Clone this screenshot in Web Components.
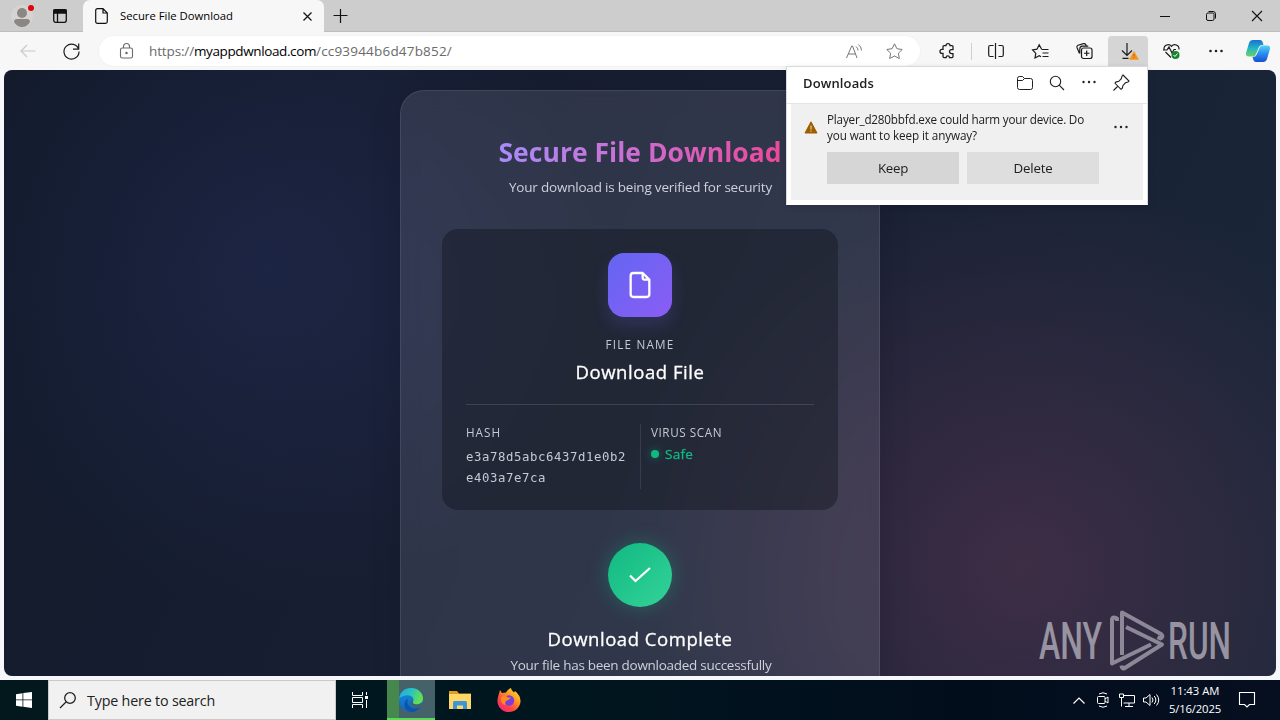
<!DOCTYPE html>
<html lang="en">
<head>
<meta charset="utf-8">
<title>Secure File Download</title>
<style>
html,body{margin:0;height:100%;overflow:hidden;background:#f3f5f9}
body{font-family:"Open Sans","Noto Sans",sans-serif;color:#1a1a1a}
</style>
</head>
<body>
<desktop-screen></desktop-screen>
<script>
const define = (name, css, html) => customElements.define(name, class extends HTMLElement {
  constructor() {
    super();
    this.attachShadow({mode: 'open'}).innerHTML =
      `<style>*{box-sizing:border-box}svg{display:block;fill:none;stroke:currentColor;overflow:visible}svg[stroke="none"]{stroke:none}${css}</style>${html}`;
  }
});

// A single line of text whose tracking is adjusted to fill a given width.
customElements.define('fit-text', class extends HTMLElement {
  constructor() {
    super();
    this.attachShadow({mode: 'open'}).innerHTML =
      '<style>:host{display:block;white-space:pre;flex:none}span{display:inline-block}</style><span><slot></slot></span>';
  }
  connectedCallback() {
    const w = parseFloat(this.getAttribute('w'));
    const s = this.shadowRoot.querySelector('span');
    requestAnimationFrame(() => this.fit(s, w));
    this.fit(s, w);
  }
  fit(s, w) {
    this.style.width = w + 'px';
    s.style.letterSpacing = '0px';
    const natural = s.getBoundingClientRect().width;
    if (natural) s.style.letterSpacing = (w - natural) / this.textContent.length + 'px';
  }
});

define('tab-strip', `
:host{display:flex;height:32px;background:#cdcdcd;color:#111;box-shadow:inset 0 -1px #bdbdbd}
.c{display:grid;place-items:center;height:32px;flex:none}
.tab{display:flex;align-items:center;width:241px;height:32px;background:#f7f7f7;border-radius:7px 7px 0 0;padding-left:12px;font-size:11.3px;flex:none}
.tab fit-text{margin:-2px 0 0 12px;color:#000}
.sp{flex:1}`,
`<div class="c" style="width:44px"><svg width="26" height="24" viewBox="0 0 26 24" stroke="none"><circle cx="13" cy="12" r="11" fill="#d6d3d0"/><circle cx="13" cy="9" r="5" fill="#8b8784"/><path d="M5 18q0-3 3-3h10q3 0 3 3-3 5-8 5t-8-5" fill="#8b8784"/><circle cx="22" cy="4" r="3" fill="#e3000b"/></svg></div>
<div class="c" style="width:39px;padding-right:7px"><svg width="14" height="14" viewBox="0 0 14 14" stroke-width="1.3"><rect x=".7" y=".7" width="12.6" height="12.6" rx="2"/><path d="M1 1h12v3H1z" fill="currentColor"/><path d="M4.5 4v9"/></svg></div>
<div class="tab"><svg width="13" height="16" viewBox="0 0 13 16" stroke-width="1.2"><path d="M2.5.7H8L12.3 5v8.5q0 1.8-1.8 1.8h-8q-1.8 0-1.8-1.8v-11Q.7.7 2.5.7zM8 .7V5h4.3"/></svg><fit-text w="113">Secure File Download</fit-text><svg style="margin-left:70px" width="9" height="9" viewBox="0 0 9 9" stroke-width="1.2"><path d="M.5.5l8 8M8.500.5l-8 8"/></svg></div>
<div class="c" style="width:33px"><svg width="14" height="14" viewBox="0 0 14 14" stroke-width="1.2"><path d="M6.500 0v14M-.5 6.500h14"/></svg></div>
<div class="sp"></div>
<div class="c" style="width:46px"><svg width="10" height="10" viewBox="0 0 10 10"><path d="M0 5.500h10"/></svg></div>
<div class="c" style="width:46px"><svg width="10" height="10" viewBox="0 0 10 10"><rect x=".5" y="2" width="7.500" height="7.500" rx="1.500"/><path d="M2.500.5H7Q9.500.5 9.500 3v4.500"/></svg></div>
<div class="c" style="width:46px"><svg width="10" height="10" viewBox="0 0 10 10" stroke-width="1.1"><path d="M0 0l10 10M10 0L0 10"/></svg></div>`);

define('tool-bar', `
:host{display:flex;align-items:center;height:38px;background:#f7f7f7;color:#1b1b1b;padding-left:6px}
.c{display:grid;place-items:center;width:44px;height:30px;flex:none}
.addr{display:flex;align-items:center;width:821px;height:30px;margin-left:6px;border-radius:15px;background:#fff;box-shadow:0 0 0 1px #f2f2f2;font-size:13.5px;color:#6a6a6a;flex:none;padding-left:21px}
.addr>svg{margin-right:16px}
.addr .s{margin-left:auto;display:flex;align-items:center;gap:24px;padding-right:17px;color:#777}
.sep{width:1px;height:17px;background:#cfcfcf;margin-left:1px}
.dl{width:40px;height:30px;background:#d5d5d5;border-radius:4px 4px 0 0;margin:0 2px}`,
`<div class="c" style="color:#cacaca"><svg width="16" height="14" viewBox="0 0 16 14" stroke-width="1.2"><path d="M15.500 7H1M7 1L1 7l6 6"/></svg></div>
<div class="c" style="width:43px"><svg width="17" height="17" viewBox="0 0 17 17" stroke-width="1.2"><path d="M15.600 6.200A7.500 7.500 0 1 0 16 8.500M15.700.5v5.700H10"/></svg></div>
<div class="addr"><svg width="13" height="16" viewBox="0 0 13 16" stroke-width="1.1"><rect x=".5" y="5" width="12" height="10" rx="1.800"/><path d="M3.500 5V3.500a3 3 0 0 1 6 0V5"/><circle cx="6.500" cy="10" r=".7" fill="currentColor"/></svg><fit-text w="45">https://</fit-text><fit-text w="122" style="color:#000">myappdwnload.com</fit-text><fit-text w="136">/cc93944b6d47b852/</fit-text>
<div class="s"><svg width="17" height="15" viewBox="-1 0 17 15"><path d="M.5 14L5.700 2h.8L11 14M2.300 10h7.400M10 2.500q2 1.500 2 4M12.300.5Q15.500 2.500 15.500 6.500"/></svg><svg width="17" height="16" viewBox="0 0 17 16"><path d="M8.500.8l2.400 4.900 5.300.8-3.800 3.700.9 5.300-4.800-2.500-4.800 2.500.9-5.300L.8 6.500l5.300-.8z"/></svg></div></div>
<div class="c" style="margin-left:6px"><svg width="16" height="16" viewBox="1 0 16 16" stroke-width="1.25"><path d="M5 2.500h2a2 2 0 0 1 4 0h2q1 0 1 1v3h-1.500a2 2 0 0 0 0 4H14v3q0 1-1 1h-2.500a1.700 1.700 0 0 0-3.400 0H5q-1 0-1-1V10.400H3a2 2 0 0 1 0-4h1V3.500q0-1 1-1z"/></svg></div>
<div class="sep"></div>
<div class="c" style="margin-left:2px"><svg width="16" height="16" viewBox="0 0 16 16" stroke-width="1.2"><path d="M5.500 2.500H2.200Q.7 2.500.7 4v8q0 1.500 1.500 1.500h3.300M10.500 2.500h3.300q1.500 0 1.500 1.500v8q0 1.500-1.500 1.500h-3.300M7.500 0v16M5 2.500h.6M5 13.500h.6"/></svg></div>
<div class="c"><svg width="17" height="15" viewBox="0 0 17 15" stroke-width="1.2"><path d="M9.500 5L7.200.8 5 5.200.6 6l3.200 3.400L3 14l4.200-2.200 1.800 1M9.500 5.500h7M10.500 9h6M10.500 12.500h6"/></svg></div>
<div class="c"><svg width="17" height="16" viewBox="0 0 17 16" stroke-width="1.200"><rect x="5.500" y="5" width="10.500" height="10.500" rx="2"/><path d="M10.700 7.500v5.500M8 10.250h5.500M3.500 10.500L1 4.500q-.5-1.500 1-2.200L7.500.6q1.500-.3 2.200 1l.7 1.400M3.800 10.500V6q0-2.500 2.500-2.800h6"/></svg></div>
<div class="c dl"><svg width="20" height="20" viewBox="0 0 20 20" stroke-width="1.200"><path d="M9 2v12M4 9.500l5 5 5-5M4.500 17.300h6"/><path d="M16 10l5 8.700H11z" fill="#f7941d" stroke="none"/><path d="M16 13v2.500M16 16.300v1" stroke="#c06400" stroke-width="1"/></svg></div>
<div class="c"><svg width="18" height="17" viewBox="0 0 18 17" stroke-width="1.200"><path d="M8 14.500L2.500 9M1 6.500C.5 2 6 0 8.500 3.300 11 0 16.500 2 16 6.500M0 7h4l2-3 3 6 2-3.500h2"/><circle cx="12.500" cy="12" r="4" fill="#16852c" stroke="none"/><path d="M10.500 12l1.500 1.500 2.500-3" stroke="#fff" stroke-width="1"/></svg></div>
<div class="c"><svg width="14" height="4" viewBox="0 0 14 4" style="fill:#222;stroke:none"><circle cx="1.500" cy="2" r="1.300"/><circle cx="7" cy="2" r="1.300"/><circle cx="12.500" cy="2" r="1.300"/></svg></div>
<div class="c" style="width:40px"><svg width="24" height="22" viewBox="0 0 24 22" stroke="none"><defs><linearGradient id="a" x1="0" y1="0" x2="0" y2="1"><stop stop-color="#1a6fd0"/><stop offset=".5" stop-color="#22b5c4"/><stop offset="1" stop-color="#6fd35f"/></linearGradient><linearGradient id="b" x1="0" y1="0" x2="0" y2="1"><stop stop-color="#53d3f5"/><stop offset=".5" stop-color="#2a8cf0"/><stop offset="1" stop-color="#1751d0"/></linearGradient></defs><path d="M7 0h7q2 0 2.700 2.300L17.500 5H16q-2.500 0-3.300 2.500L10 14q-.8 2.500-3 2.500H3q-4 0-2.800-4L3 3Q4 0 7 0z" style="fill:url(#a)"/><path d="M17 22h-7q-2 0-2.700-2.300L6.500 17q3.300 0 4.200-2.500L13.500 8q.8-2.500 3-2.500H21q4 0 2.800 4L21 19q-1 3-4 3z" style="fill:url(#b)"/></svg></div>`);

define('file-card', `
:host{display:block;width:396px;height:281px;border-radius:16px;background:rgba(17,22,30,.43);padding:24px;text-align:center;color:#c6cad4}
.ico{display:grid;place-items:center;width:64px;height:64px;border-radius:16px;margin:0 auto;background:linear-gradient(135deg,#6366f1,#8b5cf6);box-shadow:0 8px 16px rgba(99,102,241,.2);color:#fff}
fit-text{margin:0 auto}
.cols{display:grid;grid-template-columns:174px 1fr;margin-top:19px;text-align:left;height:62px}
.cols fit-text{margin:0}
.r{border-left:1px solid rgba(255,255,255,.1);padding-left:10px}
.hr{height:1px;background:rgba(255,255,255,.13);margin-top:19px}
.safe{display:flex;align-items:center;gap:6px;color:#10b981;font-size:13.500px;margin-top:4px;line-height:20px;-webkit-text-stroke:.3px}
.dot{width:8px;height:8px;border-radius:50%;background:#10b981;box-shadow:0 0 8px rgba(16,185,129,.5)}
.l{font-size:11.700px;line-height:16px}
.h{font:12.300px/21px "DejaVu Sans Mono",monospace}`,
`<div class="ico"><svg width="32" height="32" viewBox="0 0 24 24" stroke-width="1.700" stroke-linejoin="round"><path d="M14 3v4a1 1 0 0 0 1 1h4M17 21H7a2 2 0 0 1-2-2V5a2 2 0 0 1 2-2h7l5 5v11a2 2 0 0 1-2 2z"/></svg></div>
<fit-text w="69" class="l" style="margin-top:19px">FILE NAME</fit-text>
<fit-text w="129" style="color:#fff;font-size:18.500px;line-height:26px;-webkit-text-stroke:.3px;margin-top:7px">Download File</fit-text>
<div class="hr"></div>
<div class="cols"><div><fit-text w="35" class="l">HASH</fit-text><div style="height:7px"></div><fit-text w="160" class="h">e3a78d5abc6437d1e0b2</fit-text><fit-text w="80" class="h">e403a7e7ca</fit-text></div>
<div class="r"><fit-text w="71" class="l">VIRUS SCAN</fit-text><div class="safe"><span class="dot"></span><fit-text w="28">Safe</fit-text></div></div></div>`);

define('any-run-mark', `:host{display:block}text{font-family:Roboto,sans-serif;font-weight:500;font-size:52px;fill:#aaa6b2;stroke:none}`,
`<svg width="194" height="64" viewBox="0 0 194 64" style="opacity:.85"><text x="1" y="50" textLength="63" lengthAdjust="spacingAndGlyphs">ANY</text><text x="130" y="50" textLength="63" lengthAdjust="spacingAndGlyphs">RUN</text>
<g stroke="#9c99a6" stroke-width="4" stroke-linejoin="round" stroke-linecap="butt"><path d="M79 12V9.500q-5-2.500-5 1.500V54.500L113 35.500M84 46V3.500L123 25q3 3-.5 4.500l-3-1.300M88 18L124 35.500 86 59.500q-2 .5-2.500-3"/></g></svg>`);

define('download-page', `
:host{display:block;position:relative;margin:0 4px;width:1272px;height:606px;border-radius:8px;overflow:hidden;color:#cdd1da;background:radial-gradient(circle at 21% 33%,rgba(52,62,130,.25),transparent 335px),radial-gradient(circle at 80% 82%,rgba(135,65,100,.33),transparent 400px),linear-gradient(115deg,#121a2b,#181f33 50%,#1a2739)}
.card{display:flex;flex-direction:column;align-items:center;width:480px;height:660px;margin:20px auto 0;border:1px solid rgba(255,255,255,.09);border-radius:24px;background:rgba(235,238,255,.115);box-shadow:0 8px 32px rgba(0,0,0,.14);padding-top:42px;backdrop-filter:blur(10px)}
.t{font-weight:700;font-size:26.500px;line-height:38px;background:linear-gradient(90deg,#a78bfa,#c774da 38%,#ec4899);-webkit-background-clip:text;background-clip:text;color:transparent}
.s{font-size:13.500px;line-height:20px}
.ok{display:grid;place-items:center;width:64px;height:64px;margin-top:33px;border-radius:50%;background:linear-gradient(135deg,#10b981,#34d399);box-shadow:0 0 20px rgba(16,185,129,.35);color:#fff}
any-run-mark{position:absolute;left:1034px;top:539px}`,
`<div class="card"><fit-text class="t" w="283">Secure File Download</fit-text><fit-text class="s" w="263" style="margin:6px 0 0 1px">Your download is being verified for security</fit-text>
<file-card style="margin-top:32px"></file-card>
<div class="ok"><svg width="24" height="24" viewBox="0 0 24 24" stroke-width="2.200"><path d="M2 12.500l5.500 5.500L22 5"/></svg></div>
<fit-text w="185" style="margin-top:19px;font-size:18.500px;line-height:26px;color:#fff;-webkit-text-stroke:.3px">Download Complete</fit-text><fit-text class="s" w="261" style="margin-top:3px;padding-left:1px">Your file has been downloaded successfully</fit-text></div>
<any-run-mark></any-run-mark>`);

define('downloads-flyout', `
:host{display:flex;flex-direction:column;width:362px;height:139px;background:#fff;border:1px solid #d8dadd;border-bottom-color:#fff;box-shadow:0 2px 6px rgba(0,0,0,.15);color:#202020}
.head{display:flex;align-items:center;height:37px;padding:0 17px 5px 16px;border-bottom:1px solid #e5e5e5;flex:none}
.head fit-text{font-weight:600;font-size:13px;margin-right:auto}
.ic{display:flex;align-items:center;gap:16px}
.item{flex:1;margin:0 4px 4px;background:#f0f0f0;display:grid;grid-template-columns:36px 272px 1fr;font-size:11.700px;line-height:16px}
.w{padding:17px 0 0 13px}.txt{padding-top:7px}
.b{display:flex;gap:8px;margin-top:9px;font-size:13.300px}
.b div{width:132px;height:32px;background:#dedede;display:grid;place-items:center}
.b div:first-child{background:#d6d6d6}
.m{padding:21px 0 0 15px}`,
`<div class="head"><fit-text w="71">Downloads</fit-text><div class="ic">
<svg width="16" height="14" viewBox="0 0 16 14"><path d="M.5 2.500q0-2 2-2h3l2 2h6q2 0 2 2v7q0 2-2 2h-11q-2 0-2-2zM.5 4.500h5l2-2"/></svg>
<svg width="16" height="16" viewBox="0 0 16 16" stroke-width="1.100"><circle cx="6.500" cy="6.500" r="5.200"/><path d="M10.200 10.200l4.800 4.800"/></svg>
<svg width="16" height="4" viewBox="0 0 16 4" style="fill:#222;stroke:none"><circle cx="2.500" cy="1" r="1.200"/><circle cx="8" cy="1" r="1.200"/><circle cx="13.500" cy="1" r="1.200"/></svg>
<svg width="17" height="17" viewBox="0 0 17 17" stroke-width="1.100"><path d="M10 1l6 6-1 1-2.500.8L10 11.500l-.8 3-1.200.8-6-6 .8-1.200 3-.8L8.300 4.700 9 2.200zM5 12l-4.500 4.500"/></svg></div></div>
<div class="item"><div class="w"><svg width="14" height="13" viewBox="0 0 14 13" stroke="none"><path d="M7 .8l6 11.200H1z" fill="#9d5d00" stroke="#9d5d00" stroke-linejoin="round"/><path d="M7 4.500v4M7 9.500v1.300" stroke="#f5d9a8" stroke-width="1.100"/></svg></div>
<div class="txt"><fit-text w="257">Player_d280bbfd.exe could harm your device. Do</fit-text><fit-text w="150">you want to keep it anyway?</fit-text><div class="b"><div><fit-text w="30">Keep</fit-text></div><div><fit-text w="39">Delete</fit-text></div></div></div>
<div class="m"><svg width="14" height="4" viewBox="0 0 14 4" style="fill:#222;stroke:none"><circle cx="1.500" cy="2" r="1.200"/><circle cx="7" cy="2" r="1.200"/><circle cx="12.500" cy="2" r="1.200"/></svg></div></div>`);

define('task-bar', `
:host{display:flex;height:40px;background:linear-gradient(90deg,#03181d,#00161f 45%,#020d1c 75%,#050f20);color:#fff}
.c{display:grid;place-items:center;height:40px;flex:none}
.search{display:flex;align-items:center;width:288px;background:#f1f1f1;border:1px solid #c9c9c9;padding-left:11px;color:#222;font-size:14.300px;flex:none}
.search fit-text{margin-left:11px}
.edge{width:48px;background:linear-gradient(90deg,#45874d 12px,#45616a 12px);box-shadow:inset 0 -2px #52e052}
.sp{flex:1}
.clk{font-size:11.300px;line-height:18px;justify-items:center;align-content:center;width:60px}`,
`<div class="c" style="width:48px"><svg width="16" height="16" viewBox="0 0 16 16" style="fill:#fff;stroke:none"><path d="M0 2.200L6.500 1.200v6.300H0zM7.300 1.100L16 0v7.500H7.300zM0 8.300h6.500v6.400L0 13.800zM7.300 8.300H16V16l-8.700-1.200z"/></svg></div>
<div class="search"><svg width="16" height="16" viewBox="0 0 16 16" stroke-width="1.300"><circle cx="10" cy="6" r="5.300"/><path d="M6 10L0 16"/></svg><fit-text w="128">Type here to search</fit-text></div>
<div class="c" style="width:51px;padding-right:3px"><svg width="16" height="16" viewBox="0 0 16 16"><path d="M.5 0v3.500h10V0M.5 16v-3.500h10V16M.5 5.500h10v5H.5zM14.500 0v3M14.500 8v8"/><path d="M13 4h3v3h-3z" fill="#fff" stroke="none"/></svg></div>
<div class="c edge"><svg width="24" height="24" viewBox="0 0 24 24" stroke="none"><defs><linearGradient id="g" x1="0" y1="0" x2="1" y2=".4"><stop stop-color="#23a8e5"/><stop offset=".5" stop-color="#29c3c0"/><stop offset="1" stop-color="#64df55"/></linearGradient><linearGradient id="h" x1="0" y1="0" x2="0" y2="1"><stop stop-color="#168ee0"/><stop offset="1" stop-color="#0f66bd"/></linearGradient></defs><circle cx="12" cy="12" r="12" style="fill:url(#h)"/><path d="M.2 10.500C1 4 6 0 12 0c7 0 12 5 12 10.300 0 4-3 6.200-6.200 6.200-3 0-4.500-1.200-4-2.200 2-3 0-7-4.800-7-4 0-7.300 1.500-8.800 3.200z" style="fill:url(#g)"/><path d="M9 10.500c-2.500 5 2 10.500 8 10 2-.3 3.500-1 5-2.300C20 22 16 24 12 24 5 22.500 3 14 9 10.500z" style="fill:#0e56a5"/><path d="M13.800 14.300c-.5 1 1 2.200 4 2.200 1.700 0 3.200-.6 4.300-1.500h1.500l-1.500 3.500c-5 3.500-11-.5-10.500-5 .8-2 3.200-1 2.200.8z" style="fill:#45616a"/></svg></div>
<div class="c" style="width:50px"><svg width="22" height="18" viewBox="0 0 22 18" stroke="none"><path d="M0 0h8l2 2.500h12V6H0z" style="fill:#e59b1d"/><path d="M0 3h22v15H0z" style="fill:#ffd768"/><path d="M4 18v-6.500q0-1.500 1.500-1.500h11q1.500 0 1.500 1.500V18h-4v-3.500H8V18z" style="fill:#3b95d6"/></svg></div>
<div class="c" style="width:48px"><svg width="24" height="24" viewBox="0 0 24 24" stroke="none"><defs><linearGradient id="f" x1="1" y1="0" x2=".2" y2="1"><stop stop-color="#fff04a"/><stop offset=".4" stop-color="#ff9a22"/><stop offset=".7" stop-color="#ff493f"/><stop offset="1" stop-color="#f0247f"/></linearGradient></defs><path d="M3 2l2 3 4-.5Q11 1 14 0q0 2.500 3 4.500L18 3q6 5 5.500 11C22.500 20 18 24 12 24 5 24 0 18.500.5 12 1 8 2 6 3 2z" style="fill:url(#f)"/><circle cx="12" cy="12.500" r="5.200" style="fill:#7a3fd8"/><path d="M5 9q3-2 6 .5 2 .5 3-.5-1 3-4 3.500Q7 14 9 17q-6-1-5-8z" style="fill:#ff8a20"/></svg></div>
<div class="sp"></div>
<div class="c" style="width:24px"><svg width="12" height="7" viewBox="0 0 12 7" stroke-width="1.200"><path d="M.5 6.500L6 1l5.500 5.500"/></svg></div>
<div class="c" style="width:24px"><svg width="12" height="16" viewBox="0 0 12 16"><rect x=".5" y="4.500" width="7.500" height="7" rx="1"/><path d="M8 7l3-2v6L8 9M2 2q4-2.500 8 0M2 14q4 2.500 8 0"/></svg></div>
<div class="c" style="width:24px"><svg width="16" height="14" viewBox="0 0 16 14"><path d="M5 2.500h10.500v7.500H4.500M2.500 5v8.500M.5 1h4v3.500h-4zM6 13.500h8M10 10v3.500"/></svg></div>
<div class="c" style="width:24px"><svg width="17" height="14" viewBox="0 0 17 14"><path d="M.5 5h2.500L7 1.500v11L3 9H.5zM9 4.500q2 2.500 0 5M11.200 3q3.300 4 0 8M13.500 1.500q4.500 5.500 0 11"/></svg></div>
<div class="c clk" style="margin-left:2px"><fit-text w="49">11:43 AM</fit-text><fit-text w="52">5/16/2025</fit-text></div>
<div class="c" style="width:44px;margin-right:11px"><svg width="16" height="16" viewBox="0 0 16 16" stroke-width="1.100"><path d="M.5.5h15v12h-5L8 15l-2.500-2.500h-5z"/></svg></div>`);

define('desktop-screen', `
:host{display:flex;flex-direction:column;position:relative;width:1280px;height:720px;background:#f5f7fa}
tab-strip,tool-bar,download-page,task-bar{flex:none}
task-bar{margin-top:4px}
downloads-flyout{position:absolute;left:786px;top:66px}`,
`<tab-strip></tab-strip><tool-bar></tool-bar><download-page></download-page><task-bar></task-bar><downloads-flyout></downloads-flyout>`);
</script>
</body>
</html>
